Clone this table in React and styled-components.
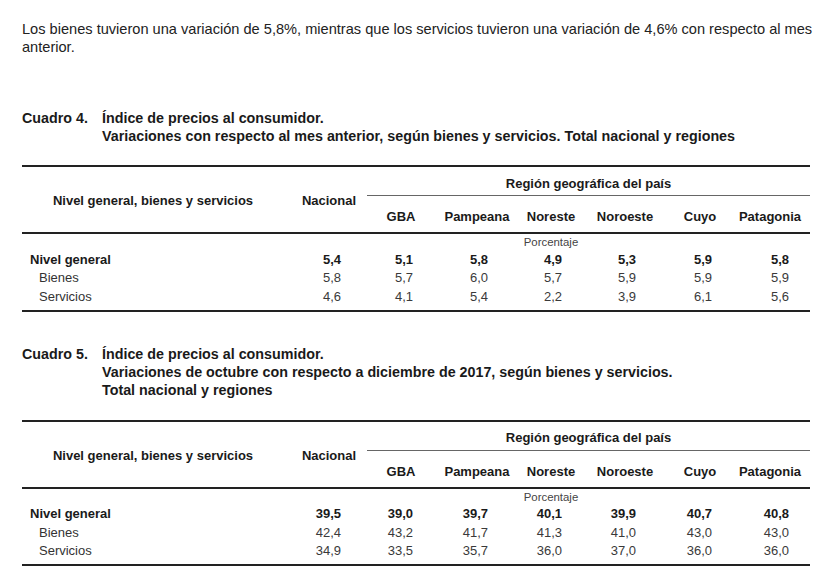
import React from 'react'
import styled, { createGlobalStyle } from 'styled-components'

const GlobalStyle = createGlobalStyle`
  html, body {
    margin: 0;
    padding: 0;
    background: #ffffff;
  }
  body {
    font-family: "Liberation Sans", Arial, Helvetica, sans-serif;
    color: #1d1d1d;
  }
`

const COLS = '270px 72px 74px 78px 70px 78px 72px 74px'
const PADS = [0, 23, 25, 28, 24, 28, 24, 21]
const REGIONS = ['GBA', 'Pampeana', 'Noreste', 'Noroeste', 'Cuyo', 'Patagonia']

const Page = styled.div`
  width: 788px;
  padding: 21px 0 0 22px;
`

const Intro = styled.p`
  margin: 0;
  width: 800px;
  font-size: 14.6px;
  line-height: 17.5px;
  color: #222;
`

const Caption = styled.div`
  display: grid;
  grid-template-columns: 80px 1fr;
  margin-top: ${p => p.$top}px;
  font-size: 14.3px;
  font-weight: bold;
  line-height: 18px;
  color: #1a1a1a;
`

const CaptionLines = styled.div`
  display: flex;
  flex-direction: column;
`

const Table = styled.div`
  margin-top: ${p => p.$top}px;
  border-top: 2px solid #222;
  border-bottom: 2px solid #222;
  font-size: 13px;
`

const HeadGrid = styled.div`
  display: grid;
  grid-template-columns: ${COLS};
  grid-template-rows: 29px 36px;
  border-bottom: 2px solid #222;
  font-weight: bold;
  color: #1a1a1a;
`

const StubHead = styled.div`
  grid-row: 1 / 3;
  grid-column: ${p => p.$col};
  display: flex;
  align-items: center;
  justify-content: center;
  padding: 2px ${p => p.$pr || 0}px 0 ${p => p.$pl || 0}px;
`

const RegionHead = styled.div`
  grid-column: 3 / -1;
  margin-left: 3px;
  border-bottom: 1px solid #666;
  display: flex;
  align-items: center;
  justify-content: center;
  padding-top: 4px;
`

const ColHead = styled.div`
  display: flex;
  align-items: flex-end;
  justify-content: center;
  padding: 0 ${p => (p.$last ? 6 : 0)}px 8px 0;
`

const UnitRow = styled.div`
  display: grid;
  grid-template-columns: ${COLS};
  height: 16px;
`

const Unit = styled.div`
  grid-column: 5;
  text-align: center;
  font-size: 11.4px;
  color: #444;
  line-height: 16px;
`

const BodyGrid = styled.div`
  display: grid;
  grid-template-columns: ${COLS};
  grid-auto-rows: 18.5px;
  padding-bottom: 4px;
  align-items: center;
`

const Label = styled.div`
  padding-left: ${p => (p.$main ? 8 : 17)}px;
  font-weight: ${p => (p.$main ? 'bold' : 'normal')};
  color: ${p => (p.$main ? '#1a1a1a' : '#333')};
`

const Num = styled.div`
  text-align: right;
  padding-right: ${p => p.$pad}px;
  font-weight: ${p => (p.$main ? 'bold' : 'normal')};
  color: ${p => (p.$main ? '#1a1a1a' : '#3a3a3a')};
`

const ROW_NAMES = ['Nivel general', 'Bienes', 'Servicios']

const PriceTable = ({ rows, top }) => (
  <Table $top={top}>
    <HeadGrid>
      <StubHead $col="1" $pr={8}>Nivel general, bienes y servicios</StubHead>
      <StubHead $col="2" $pl={2}>Nacional</StubHead>
      <RegionHead>Región geográfica del país</RegionHead>
      {REGIONS.map((r, i) => (
        <ColHead key={r} $last={i === REGIONS.length - 1}>{r}</ColHead>
      ))}
    </HeadGrid>
    <UnitRow>
      <Unit>Porcentaje</Unit>
    </UnitRow>
    <BodyGrid>
      {rows.map((values, i) => (
        <React.Fragment key={ROW_NAMES[i]}>
          <Label $main={i === 0}>{ROW_NAMES[i]}</Label>
          {values.map((v, j) => (
            <Num key={j} $main={i === 0} $pad={PADS[j + 1]}>
              {v}
            </Num>
          ))}
        </React.Fragment>
      ))}
    </BodyGrid>
  </Table>
)

const monthly = [
  ['5,4', '5,1', '5,8', '4,9', '5,3', '5,9', '5,8'],
  ['5,8', '5,7', '6,0', '5,7', '5,9', '5,9', '5,9'],
  ['4,6', '4,1', '5,4', '2,2', '3,9', '6,1', '5,6'],
]

const cumulative = [
  ['39,5', '39,0', '39,7', '40,1', '39,9', '40,7', '40,8'],
  ['42,4', '43,2', '41,7', '41,3', '41,0', '43,0', '43,0'],
  ['34,9', '33,5', '35,7', '36,0', '37,0', '36,0', '36,0'],
]

export default function App() {
  return (
    <>
      <GlobalStyle />
      <Page>
        <Intro>
          Los bienes tuvieron una variación de 5,8%, mientras que los servicios tuvieron una
          variación de 4,6% con respecto al mes anterior.
        </Intro>

        <Caption $top={53}>
          <span>Cuadro 4.</span>
          <CaptionLines>
            <span>Índice de precios al consumidor.</span>
            <span>Variaciones con respecto al mes anterior, según bienes y servicios. Total nacional y regiones</span>
          </CaptionLines>
        </Caption>
        <PriceTable rows={monthly} top={20} />

        <Caption $top={33}>
          <span>Cuadro 5.</span>
          <CaptionLines>
            <span>Índice de precios al consumidor.</span>
            <span>Variaciones de octubre con respecto a diciembre de 2017, según bienes y servicios.</span>
            <span>Total nacional y regiones</span>
          </CaptionLines>
        </Caption>
        <PriceTable rows={cumulative} top={21} />
      </Page>
    </>
  )
}
